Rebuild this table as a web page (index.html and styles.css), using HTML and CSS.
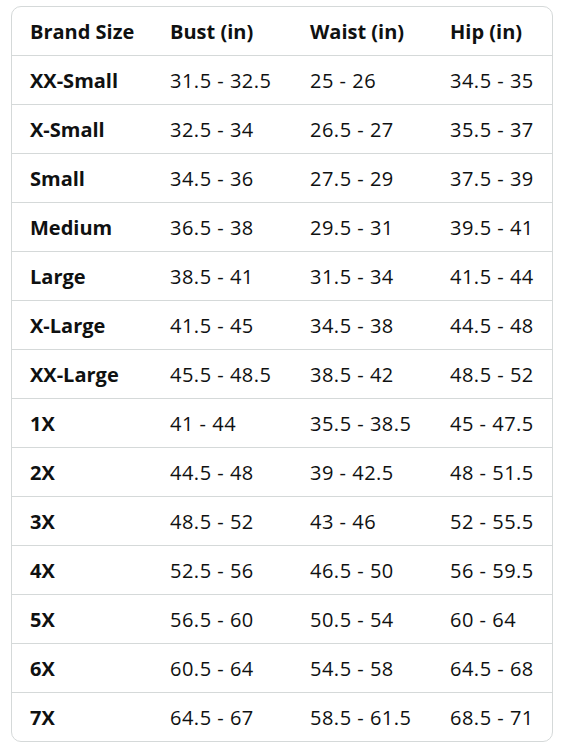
FILE: index.html
```html
<!DOCTYPE html>
<html>
<head>
<meta charset="utf-8">
<link rel="stylesheet" href="styles.css">
</head>
<body>
<div class="wrap">
<table class="size-table">
<thead>
<tr><th>Brand Size</th><th>Bust (in)</th><th>Waist (in)</th><th>Hip (in)</th></tr>
</thead>
<tbody>
<tr><th>XX-Small</th><td>31.5 - 32.5</td><td>25 - 26</td><td>34.5 - 35</td></tr>
<tr><th>X-Small</th><td>32.5 - 34</td><td>26.5 - 27</td><td>35.5 - 37</td></tr>
<tr><th>Small</th><td>34.5 - 36</td><td>27.5 - 29</td><td>37.5 - 39</td></tr>
<tr><th>Medium</th><td>36.5 - 38</td><td>29.5 - 31</td><td>39.5 - 41</td></tr>
<tr><th>Large</th><td>38.5 - 41</td><td>31.5 - 34</td><td>41.5 - 44</td></tr>
<tr><th>X-Large</th><td>41.5 - 45</td><td>34.5 - 38</td><td>44.5 - 48</td></tr>
<tr><th>XX-Large</th><td>45.5 - 48.5</td><td>38.5 - 42</td><td>48.5 - 52</td></tr>
<tr><th>1X</th><td>41 - 44</td><td>35.5 - 38.5</td><td>45 - 47.5</td></tr>
<tr><th>2X</th><td>44.5 - 48</td><td>39 - 42.5</td><td>48 - 51.5</td></tr>
<tr><th>3X</th><td>48.5 - 52</td><td>43 - 46</td><td>52 - 55.5</td></tr>
<tr><th>4X</th><td>52.5 - 56</td><td>46.5 - 50</td><td>56 - 59.5</td></tr>
<tr><th>5X</th><td>56.5 - 60</td><td>50.5 - 54</td><td>60 - 64</td></tr>
<tr><th>6X</th><td>60.5 - 64</td><td>54.5 - 58</td><td>64.5 - 68</td></tr>
<tr><th>7X</th><td>64.5 - 67</td><td>58.5 - 61.5</td><td>68.5 - 71</td></tr>
</tbody>
</table>
</div>
</body>
</html>
```
FILE: styles.css
```css
html, body {
  margin: 0;
  padding: 0;
  background: #ffffff;
}
.wrap {
  padding: 6px 8px 0 11px;
}
.size-table {
  width: 542px;
  border-collapse: separate;
  border-spacing: 0;
  border: 1px solid #d5d9d9;
  border-radius: 10px;
  table-layout: fixed;
  font-family: "Open Sans", "Noto Sans", sans-serif;
  font-size: 20px;
  color: #0f1111;
}
.size-table th,
.size-table td {
  height: 49px;
  padding: 0 0 0 18px;
  text-align: left;
  vertical-align: middle;
  border-bottom: 1px solid #d5d9d9;
  box-sizing: border-box;
  white-space: nowrap;
}
.size-table th:nth-child(1),
.size-table th:nth-child(2),
.size-table th:nth-child(3) {
  width: 140px;
}
.size-table th {
  font-weight: 700;
}
.size-table td {
  font-weight: 400;
  letter-spacing: 0.5px;
}
.size-table tbody tr:last-child th,
.size-table tbody tr:last-child td {
  border-bottom: none;
  height: 48px;
}
```
